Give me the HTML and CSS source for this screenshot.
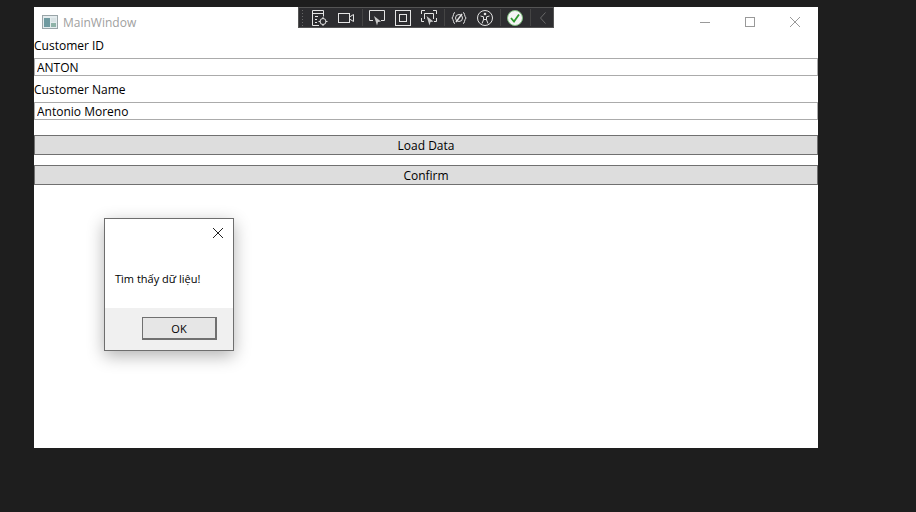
FILE: index.html
```html
<!DOCTYPE html>
<html lang="en">
<head>
    <meta charset="UTF-8">
    <meta name="viewport" content="width=device-width, initial-scale=1.0">
    <title>MainWindow</title>
    <link rel="stylesheet" href="styles.css">
</head>
<body>
    <div class="window">
        <div class="titlebar">
            <svg class="app-icon" viewBox="0 0 16 16">
                <rect x="0.5" y="1.5" width="15" height="13" fill="#e4ecee" stroke="#9aa5a8"/>
                <rect x="2" y="4" width="6" height="9" fill="#6f9aa0"/>
                <rect x="9" y="4" width="5" height="4" fill="#d8e2e4"/>
                <rect x="9" y="9" width="5" height="4" fill="#8fb3a8"/>
            </svg>
            <span class="title">MainWindow</span>
            <div class="window-buttons">
                <svg viewBox="0 0 10 10"><path d="M0 5.5h10" stroke="#999" fill="none"/></svg>
                <svg viewBox="0 0 10 10"><rect x="0.5" y="0.5" width="9" height="9" stroke="#999" fill="none"/></svg>
                <svg viewBox="0 0 10 10"><path d="M0 0l10 10M10 0L0 10" stroke="#999" fill="none"/></svg>
            </div>
        </div>

        <div class="content">
            <label class="field-label">Customer ID</label>
            <input class="field-input" type="text" value="ANTON">
            <label class="field-label">Customer Name</label>
            <input class="field-input" type="text" value="Antonio Moreno">
            <button class="action first">Load Data</button>
            <button class="action">Confirm</button>
        </div>
    </div>

    <div class="toolbar">
        <div class="grip"></div>
        <div class="tool-group first-group">
            <svg viewBox="0 0 16 16" fill="none" stroke="#e4e4e4">
                <path d="M7 15.5H.5V.5h11v6M.5 3.5h11M3 6.5h3M3 9.5h2M3 12.5h2"/>
                <circle cx="11" cy="11.5" r="3"/>
                <path d="M11 7v2M11 14v2M6.5 11.500h2M13.500 11.500h2"/>
            </svg>
            <svg viewBox="0 0 16 16" fill="none" stroke="#e4e4e4">
                <rect x="0.5" y="3.500" width="11" height="9"/>
                <path d="M11.500 7l4-2.500v7l-4-2.500"/>
            </svg>
        </div>
        <div class="tool-group">
            <svg viewBox="0 0 16 16" fill="none" stroke="#e4e4e4">
                <path d="M4 10.500H.5V.5h15v10H12"/>
                <path d="M5 6l7 5.500-3 .5 -1 3.500z" fill="#c8c8c8" stroke="none"/>
            </svg>
            <svg viewBox="0 0 16 16" fill="none" stroke="#e4e4e4">
                <rect x="0.5" y="0.500" width="15" height="15"/>
                <rect x="4.500" y="4.500" width="7" height="7"/>
            </svg>
            <svg viewBox="0 0 16 16" fill="none" stroke="#e4e4e4">
                <path d="M.5 4V.5H4M12 .5h3.500V4M.5 8v3.500H3M15.500 8v3.500H13"/>
                <path d="M3.500 9V3.500h9V9" />
                <path d="M5.500 6l7 5.500-3 .5-1 3.500z" fill="#c8c8c8" stroke="none"/>
            </svg>
        </div>
        <div class="tool-group">
            <svg viewBox="0 0 16 16" fill="none" stroke="#e4e4e4">
                <path d="M4 2.500C2 2.500 3 6 1 8c2 2 1 5.500 3 5.500M12 2.500c2 0 1 3.500 3 5.500-2 2-1 5.500-3 5.500"/>
                <circle cx="8" cy="8" r="3.500"/>
                <path d="M5 12L11 4" stroke-width="1.400"/>
            </svg>
            <svg viewBox="0 0 16 16" fill="none" stroke="#e4e4e4">
                <circle cx="8" cy="8" r="7.500"/>
                <circle cx="8" cy="4" r="1.300" fill="#e4e4e4" stroke="none"/>
                <path d="M3.500 6l3 .800v3L5 13.500M12.500 6l-3 .800v3l1.500 3.700M6.500 9.500h3"/>
            </svg>
        </div>
        <div class="tool-group">
            <svg viewBox="0 0 16 16" fill="none">
                <circle cx="8" cy="8" r="7.500" fill="#f4f4f4" stroke="#7fbf7f"/>
                <path d="M4 8l3 3.500L12 4.500" stroke="#2e9a2e" stroke-width="1.800"/>
            </svg>
        </div>
        <div class="tool-group">
            <svg class="chevron" viewBox="0 0 6 12" fill="none">
                <path d="M5.500 .5L.5 6l5 5.500" stroke="#6a6a6a"/>
            </svg>
        </div>
    </div>

    <div class="dialog">
        <div class="dialog-body">
            <svg class="dialog-close" viewBox="0 0 10 10"><path d="M0 0l10 10M10 0L0 10" stroke="#222" fill="none"/></svg>
            <p class="dialog-text">Tìm thấy dữ liệu!</p>
        </div>
        <div class="dialog-footer">
            <button class="dialog-ok">OK</button>
        </div>
    </div>
</body>
</html>
```

FILE: styles.css
```css
* {
    margin: 0;
    padding: 0;
    box-sizing: border-box;
}

body {
    width: 916px;
    height: 512px;
    overflow: hidden;
    background: #1e1e1e;
    font-family: "Open Sans", "Noto Sans", sans-serif;
    font-size: 12px;
    color: #000;
    padding: 7px 0 0 34px;
}

.window {
    width: 784px;
    height: 441px;
    background: #fff;
}

.titlebar {
    height: 30px;
    display: flex;
    align-items: center;
    padding-left: 8px;
}

.app-icon {
    width: 16px;
    height: 16px;
}

.title {
    margin-left: 5px;
    color: #a0a0a0;
}

.window-buttons {
    margin-left: auto;
    display: flex;
    gap: 35px;
    padding-right: 18px;
}

.window-buttons svg {
    width: 10px;
    height: 10px;
}

.content {
    display: flex;
    flex-direction: column;
}

.field-label {
    height: 18px;
    line-height: 18px;
    margin-bottom: 3px;
}

.field-input {
    height: 18px;
    border: 1px solid #ababab;
    padding: 0 2px;
    font: inherit;
    color: #000;
    margin-bottom: 5px;
    outline: none;
}

.action {
    height: 20px;
    background: #dddddd;
    border: 1px solid #707070;
    font: inherit;
    color: #000;
    margin-bottom: 10px;
}

.action.first {
    margin-top: 10px;
}

.toolbar {
    position: absolute;
    left: 298px;
    top: 7px;
    width: 256px;
    height: 21px;
    background: #2d2d30;
    border: 1px solid #555;
    display: flex;
    align-items: center;
}

.grip {
    width: 6px;
    height: 17px;
    margin-left: 2px;
    background-image: radial-gradient(#666 0.7px, transparent 0.8px);
    background-size: 3px 3px;
}

.tool-group {
    display: flex;
    align-items: center;
    gap: 10px;
    height: 17px;
    padding: 0 7px 0 6px;
    border-left: 1px solid #444;
}

.first-group {
    border-left: none;
    padding: 0 8px 0 7px;
}

.tool-group svg {
    width: 16px;
    height: 16px;
}

.tool-group .chevron {
    width: 6px;
    height: 12px;
    margin-left: 3px;
}

.dialog {
    position: absolute;
    left: 104px;
    top: 218px;
    width: 130px;
    height: 133px;
    background: #fff;
    border: 1px solid #6e6e6e;
    box-shadow: 0 5px 16px rgba(0, 0, 0, 0.3);
    display: flex;
    flex-direction: column;
    font-size: 11px;
}

.dialog-body {
    position: relative;
    height: 89px;
    padding: 52px 0 0 10px;
}

.dialog-close {
    position: absolute;
    top: 9px;
    right: 10px;
    width: 10px;
    height: 10px;
}

.dialog-footer {
    flex: 1;
    background: #f0f0f0;
    display: flex;
    justify-content: flex-end;
    align-items: flex-start;
    padding: 9px 16px 0 0;
}

.dialog-ok {
    width: 75px;
    height: 23px;
    background: #e6e6e6;
    border: 1px solid #707070;
    border-right-width: 2px;
    border-bottom-width: 2px;
    font: inherit;
    color: #000;
}
```
